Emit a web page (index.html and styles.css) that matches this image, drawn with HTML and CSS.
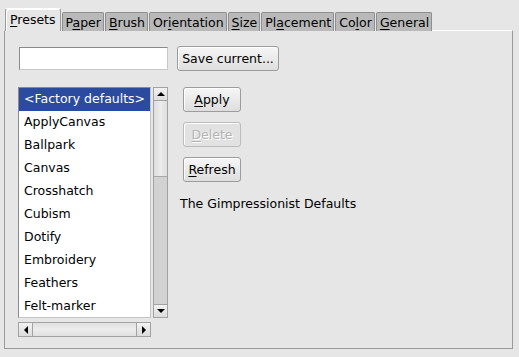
FILE: index.html
```html
<!DOCTYPE html>
<html lang="en">
    <head>
        <meta charset="UTF-8" />
        <meta name="viewport" content="width=device-width, initial-scale=1.0" />
        <title>Gimpressionist Presets</title>
        <link rel="stylesheet" href="styles.css">
    </head>
    <body>
        <div class="window">
            <div class="tabs">
                <div class="tab active"><u>P</u>resets</div>
                <div class="tab">P<u>a</u>per</div>
                <div class="tab"><u>B</u>rush</div>
                <div class="tab">Or<u>i</u>entation</div>
                <div class="tab"><u>S</u>ize</div>
                <div class="tab">Pl<u>a</u>cement</div>
                <div class="tab">Co<u>l</u>or</div>
                <div class="tab"><u>G</u>eneral</div>
            </div>
            <div class="notebook">
                <div class="top-row">
                    <input class="entry" type="text" />
                    <button class="btn save-btn">Save current...</button>
                </div>
                <div class="main-row">
                    <div class="list-pane">
                        <div class="list">
                            <div class="item selected">&lt;Factory defaults&gt;</div>
                            <div class="item">ApplyCanvas</div>
                            <div class="item">Ballpark</div>
                            <div class="item">Canvas</div>
                            <div class="item">Crosshatch</div>
                            <div class="item">Cubism</div>
                            <div class="item">Dotify</div>
                            <div class="item">Embroidery</div>
                            <div class="item">Feathers</div>
                            <div class="item">Felt-marker</div>
                        </div>
                        <div class="vscroll">
                            <div class="arrow"><span class="tri up"></span></div>
                            <div class="trough"><div class="thumb vthumb"></div></div>
                            <div class="arrow"><span class="tri down"></span></div>
                        </div>
                        <div class="hscroll">
                            <div class="arrow"><span class="tri left"></span></div>
                            <div class="trough"><div class="thumb hthumb"></div></div>
                            <div class="arrow"><span class="tri right"></span></div>
                        </div>
                    </div>
                    <div class="side">
                        <button class="btn side-btn"><u>A</u>pply</button>
                        <button class="btn side-btn" disabled><u>D</u>elete</button>
                        <button class="btn side-btn"><u>R</u>efresh</button>
                        <p class="desc">The Gimpressionist Defaults</p>
                    </div>
                </div>
            </div>
        </div>
    </body>
</html>
```

FILE: styles.css
```css
* {
    box-sizing: border-box;
}

body {
    margin: 0;
    font-family: "DejaVu Sans", sans-serif;
    font-size: 12.5px;
    color: #000;
    background-color: #e6e6e6;
}

u {
    text-decoration-thickness: 1px;
    text-underline-offset: 2px;
}

.window {
    padding: 8px 6px 8px 4px;
}

.tabs {
    display: flex;
    align-items: flex-end;
    height: 23px;
    padding-left: 1px;
    margin-bottom: -1px;
    position: relative;
    z-index: 1;
}

.tab {
    height: 19px;
    padding: 2px 2px 0 3px;
    margin-right: 1px;
    background-color: #b9b9b9;
    border: 1px solid #8e8e8e;
    border-bottom: none;
    border-radius: 2px 2px 0 0;
    line-height: 16px;
    white-space: nowrap;
}

.tab.active {
    height: 23px;
    padding: 3px 4px 0 4px;
    background-color: #e6e6e6;
    border-color: #9a9a9a;
    border-top-color: #fff;
    border-radius: 3px 3px 0 0;
    box-shadow: inset 1px 1px 0 #fff;
}

.notebook {
    height: 319px;
    border: 1px solid #9a9a9a;
    border-top-color: #fff;
    padding: 15px 14px;
}

.top-row {
    display: flex;
    align-items: center;
    gap: 9px;
}

.entry {
    width: 149px;
    height: 23px;
    margin: 0;
    border: 1px solid #8a8a8a;
    border-right-color: #c8c8c8;
    border-bottom-color: #c8c8c8;
    background-color: #fff;
    font: inherit;
}

.btn {
    margin: 0;
    font: inherit;
    color: #000;
    height: 25px;
    padding: 0;
    white-space: nowrap;
    border: 1px solid #9c9c9c;
    border-radius: 3px;
    background: linear-gradient(#f6f6f6, #dedede);
    box-shadow: inset 1px 1px 0 #fff;
}

.save-btn {
    width: 102px;
}

.btn:disabled {
    color: #b4b4b4;
    text-shadow: 1px 1px 0 #fff;
    border-color: #bcbcbc;
    background: #e2e2e2;
}

.main-row {
    display: flex;
    margin-top: 16px;
    margin-left: -1px;
}

.list-pane {
    display: grid;
    grid-template-columns: 133px 15px;
    grid-template-rows: 231px 15px;
    column-gap: 2px;
    row-gap: 4px;
}

.list {
    border: 1px solid #8a8a8a;
    border-right-color: #c4c4c4;
    border-bottom-color: #c4c4c4;
    background-color: #fff;
    overflow: hidden;
}

.item {
    height: 23px;
    line-height: 22px;
    padding-left: 5px;
    white-space: nowrap;
}

.item.selected {
    background-color: #2b4b9f;
    color: #fff;
}

.vscroll,
.hscroll {
    display: flex;
    border: 1px solid #a2a2a2;
    background-color: #d2d2d2;
}

.vscroll {
    flex-direction: column;
}

.arrow {
    flex: none;
    width: 13px;
    height: 13px;
    display: flex;
    align-items: center;
    justify-content: center;
    background: linear-gradient(#f2f2f2, #dcdcdc);
}

.vscroll .arrow:first-child {
    border-bottom: 1px solid #a2a2a2;
}

.vscroll .arrow:last-child {
    border-top: 1px solid #a2a2a2;
}

.hscroll .arrow {
    width: 14px;
}

.hscroll .arrow:first-child {
    border-right: 1px solid #a2a2a2;
}

.hscroll .arrow:last-child {
    border-left: 1px solid #a2a2a2;
}

.trough {
    flex: 1;
    display: flex;
    flex-direction: column;
}

.hscroll .trough {
    flex-direction: row;
}

.thumb {
    background: linear-gradient(90deg, #dedede, #ececec 50%, #dedede);
}

.vthumb {
    height: 76px;
    border-bottom: 1px solid #a8a8a8;
}

.hthumb {
    flex: 1;
    background: linear-gradient(#e0e0e0, #ececec 50%, #e0e0e0);
}

.tri {
    width: 0;
    height: 0;
    border: 4px solid transparent;
}

.tri.up {
    border-bottom-color: #000;
    border-top-width: 0;
}

.tri.down {
    border-top-color: #000;
    border-bottom-width: 0;
}

.tri.left {
    border-right-color: #000;
    border-left-width: 0;
}

.tri.right {
    border-left-color: #000;
    border-right-width: 0;
}

.side {
    display: flex;
    flex-direction: column;
    align-items: flex-start;
    padding-left: 12px;
}

.side-btn {
    width: 58px;
    height: 25px;
    margin: 0 0 10px 3px;
}

.desc {
    margin: 4px 0 0 0;
}
```
